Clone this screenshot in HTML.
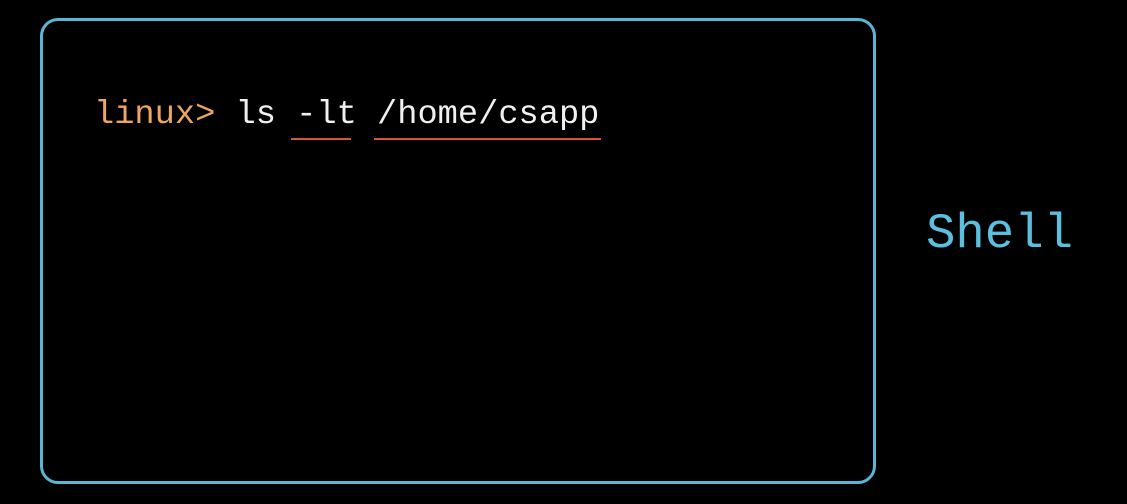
<!DOCTYPE html>
<html><head><style>
html,body{margin:0;padding:0;background:#000;width:1127px;height:504px;overflow:hidden;position:relative}
.box{position:absolute;left:40px;top:18px;width:830px;height:460px;border:3px solid #58b6d6;border-radius:18px;box-sizing:content-box}
.t{position:absolute;font-family:"Liberation Mono",monospace;white-space:pre}
.cmd{left:94px;top:95px;font-size:33.7px;line-height:40px;color:#f0f0f0}
.p{color:#eda65f}
.u{position:absolute;height:2px;background:#d9553a}
.shell{left:926px;top:206px;font-size:49px;line-height:56px;color:#5bbfe0}
</style></head><body>
<div class="box"></div>
<div class="t cmd"><span class="p">linux&gt;</span> ls -lt /home/csapp</div>
<div class="u" style="left:291px;top:138px;width:60px"></div>
<div class="u" style="left:374px;top:138px;width:227px"></div>
<div class="t shell">Shell</div>
</body></html>
